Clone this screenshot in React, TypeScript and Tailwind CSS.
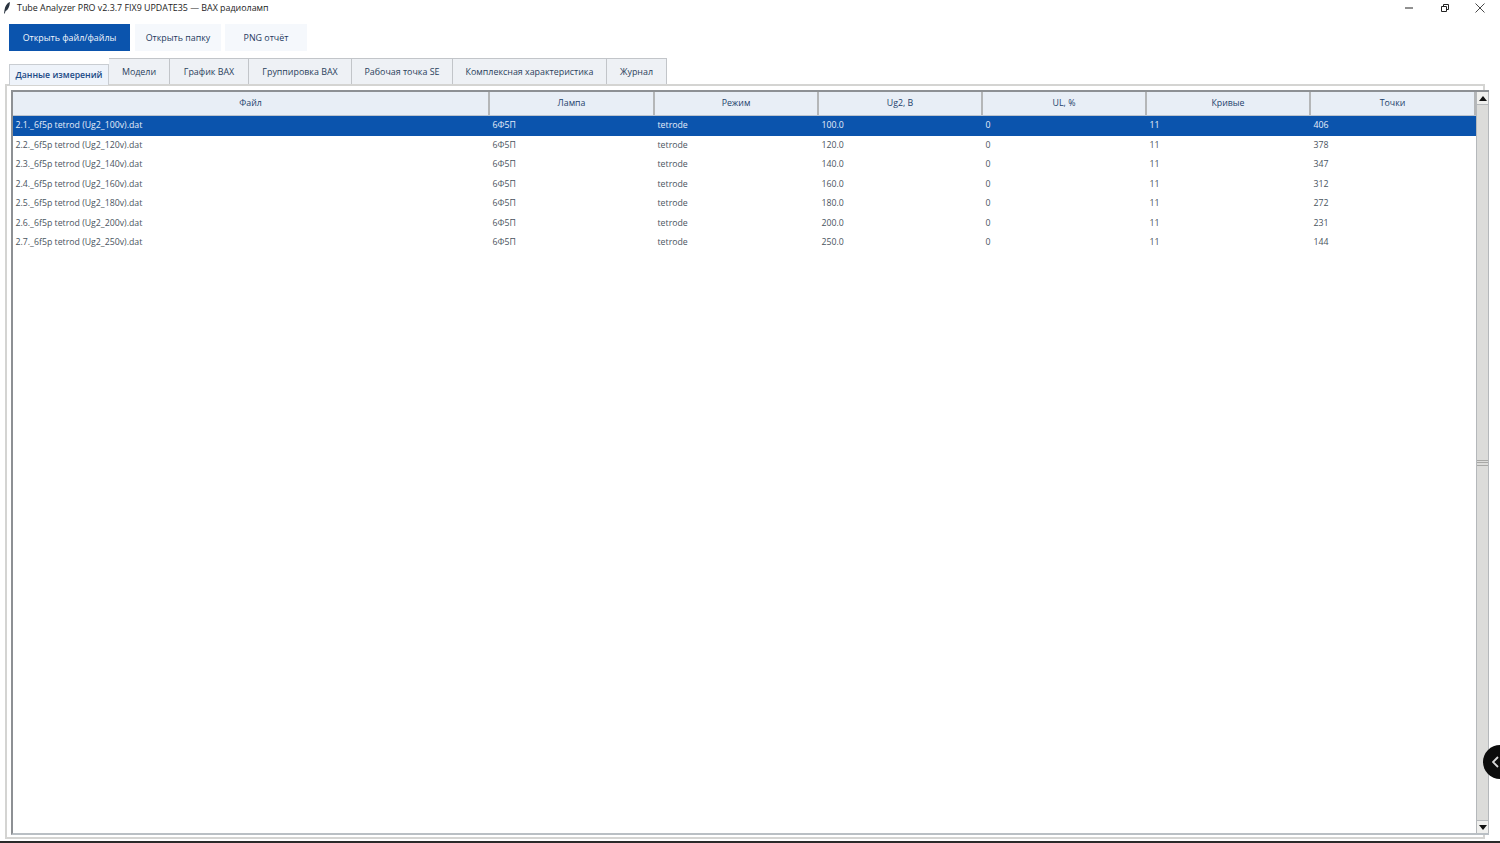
const font = { fontFamily: '"Open Sans", "Noto Sans", sans-serif' }

const tabs = ["Модели", "График ВАХ", "Группировка ВАХ", "Рабочая точка SE", "Комплексная характеристика", "Журнал"]
const tabWidths = ["w-[61px]", "w-[79px]", "w-[103px]", "w-[101px]", "w-[154px]", "w-[60px]"]

const columns = [
  { title: "Файл", width: "w-[477px]" },
  { title: "Лампа", width: "w-[165px]" },
  { title: "Режим", width: "w-[164px]" },
  { title: "Ug2, В", width: "w-[164px]" },
  { title: "UL, %", width: "w-[164px]" },
  { title: "Кривые", width: "w-[164px]" },
  { title: "Точки", width: "w-[165px]" },
]

const rows = [
  ["2.1._6f5p tetrod (Ug2_100v).dat", "6Ф5П", "tetrode", "100.0", "0", "11", "406"],
  ["2.2._6f5p tetrod (Ug2_120v).dat", "6Ф5П", "tetrode", "120.0", "0", "11", "378"],
  ["2.3._6f5p tetrod (Ug2_140v).dat", "6Ф5П", "tetrode", "140.0", "0", "11", "347"],
  ["2.4._6f5p tetrod (Ug2_160v).dat", "6Ф5П", "tetrode", "160.0", "0", "11", "312"],
  ["2.5._6f5p tetrod (Ug2_180v).dat", "6Ф5П", "tetrode", "180.0", "0", "11", "272"],
  ["2.6._6f5p tetrod (Ug2_200v).dat", "6Ф5П", "tetrode", "200.0", "0", "11", "231"],
  ["2.7._6f5p tetrod (Ug2_250v).dat", "6Ф5П", "tetrode", "250.0", "0", "11", "144"],
]

function TitleBar() {
  return (
    <div className="flex h-[16px] items-center text-[8.9px] text-[#1c1c1c]">
      <svg className="ml-[3px] h-[12px] w-[8px]" viewBox="0 0 8 12">
        <path d="M7 0C4 1 2 4 1.5 8L1 11.5h.8L2.6 9C5 8 6.5 5 7 0z" fill="#2a3440" />
      </svg>
      <span className="ml-[6px]">Tube Analyzer PRO v2.3.7 FIX9 UPDATE35 — ВАХ радиоламп</span>
      <div className="ml-auto flex items-center">
        <svg className="mr-[26px] h-[10px] w-[10px]" viewBox="0 0 10 10">
          <path d="M1 5h8" stroke="#222" strokeWidth="1" />
        </svg>
        <svg className="mr-[25px] h-[10px] w-[10px]" viewBox="0 0 10 10" fill="none">
          <path d="M1.5 3.5h5v5h-5zM3.5 3.5v-2h5v5h-2" stroke="#222" strokeWidth="1" />
        </svg>
        <svg className="mr-[15px] h-[10px] w-[10px]" viewBox="0 0 10 10">
          <path d="M.5.5l9 9M9.5.5l-9 9" stroke="#333" strokeWidth="0.9" />
        </svg>
      </div>
    </div>
  )
}

function Toolbar() {
  return (
    <div className="mt-[8px] ml-[9px] flex h-[27px] text-[8.9px]">
      <div className="flex w-[121px] items-center justify-center bg-[#0b54ad] pt-px font-medium text-[#f3f7fc]">Открыть файл/файлы</div>
      <div className="ml-[5px] flex w-[86px] items-center justify-center bg-[#f5f8fc] pt-px font-medium text-[#1f3a5f]">Открыть папку</div>
      <div className="ml-[4px] flex w-[82px] items-center justify-center bg-[#f5f8fc] pt-px font-medium text-[#1f3a5f]">PNG отчёт</div>
    </div>
  )
}

function Tabs() {
  return (
    <div className="mt-[7px] ml-[9px] flex h-[26px] items-end text-[8.9px] text-[#2a3f5c]">
      <div className="z-10 mb-[-1px] flex h-[21px] w-[100px] items-center justify-center border border-b-0 border-[#c9cdd2] bg-[#eef3fa] pt-[2px] text-[8.7px] font-semibold text-[#1c4a86]">
        Данные измерений
      </div>
      {tabs.map((tab, i) => (
        <div key={tab} className={`${tabWidths[i]} flex h-[26px] items-center justify-center border border-b-0 border-l-0 border-[#c2c5c9] bg-[#eef1f5] pt-px font-medium`}>
          {tab}
        </div>
      ))}
    </div>
  )
}

function Scrollbar() {
  return (
    <div className="flex w-[13px] flex-col border-x border-[#b5b8bb] bg-[#dcdcda]">
      <div className="flex h-[13px] items-center justify-center border-b border-[#b5b8bb] bg-[#f0f0ee]">
        <svg className="h-[5px] w-[8px]" viewBox="0 0 8 5"><path d="M4 0l4 5H0z" fill="#111" /></svg>
      </div>
      <div className="flex flex-1 items-center justify-center">
        <div className="flex h-[6px] w-full flex-col justify-between">
          <div className="h-px bg-[#a8a8a6]" />
          <div className="h-px bg-[#a8a8a6]" />
          <div className="h-px bg-[#a8a8a6]" />
        </div>
      </div>
      <div className="flex h-[13px] items-center justify-center border-t border-[#b5b8bb] bg-[#f0f0ee]">
        <svg className="h-[5px] w-[8px]" viewBox="0 0 8 5"><path d="M0 0h8L4 5z" fill="#111" /></svg>
      </div>
    </div>
  )
}

function Table() {
  return (
    <div className="flex min-w-0 flex-1 flex-col">
      <div className="flex h-[24px] shrink-0 border-b border-[#bcc4ce] bg-[#e8eef6] text-[8.8px] font-medium text-[#24426c]">
        {columns.map((col) => (
          <div key={col.title} className={`${col.width} flex items-center justify-center border-r-2 border-[#b4b6b8]`}>
            {col.title}
          </div>
        ))}
      </div>
      {rows.map((row, r) => (
        <div key={row[0]} className={`flex h-[19.5px] shrink-0 items-center text-[8.75px] ${r === 0 ? "bg-[#0b54ad] text-[#e6eefa]" : "text-[#4a5460]"}`}>
          {row.map((cell, c) => (
            <div key={c} className={`${columns[c].width} pl-[2.5px]`}>{cell}</div>
          ))}
        </div>
      ))}
    </div>
  )
}

export default function App() {
  return (
    <div className="relative flex h-[843px] w-[1500px] flex-col overflow-hidden bg-white" style={font}>
      <TitleBar />
      <Toolbar />
      <Tabs />
      <div className="mx-[5px] flex h-[755px] w-[1480px] border-2 border-[#d4d4d2] bg-white pt-[4px] pr-[1px] pb-[2px] pl-[4px]">
        <div className="flex flex-1 border-t-2 border-l-2 border-b-2 border-t-[#8d9094] border-l-[#8d9094] border-b-[#b9bfc4]">
          <Table />
          <Scrollbar />
        </div>
      </div>
      <div className="mt-auto h-[2px] bg-[#2a2a2a]" />
      {/* Floating handle over the right edge */}
      <div className="absolute top-[745px] left-[1483px] flex h-[34px] w-[34px] items-center rounded-full bg-[#0c0c0c] pl-[9px]">
        <svg className="h-[12px] w-[7px]" viewBox="0 0 7 12" fill="none">
          <path d="M6 1L1 6l5 5" stroke="#d8d8d8" strokeWidth="1.8" />
        </svg>
      </div>
    </div>
  )
}
